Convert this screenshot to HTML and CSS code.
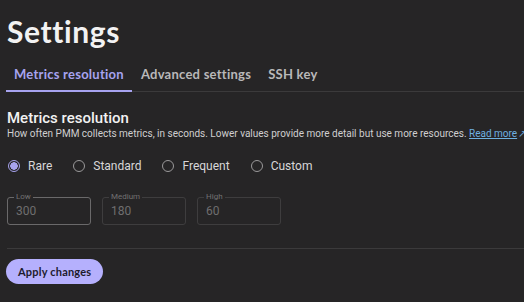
FILE: index.html
```html
<!DOCTYPE html>
<html>
<head>
    <title>Settings</title>
    <link rel="stylesheet" href="styles.css">
</head>
<body>
    <h1 class="page-title">Settings</h1>
    <div class="tabs">
        <div class="tab active">Metrics resolution</div>
        <div class="tab">Advanced settings</div>
        <div class="tab">SSH key</div>
    </div>

    <div class="section">
        <h2 class="section-title">Metrics resolution</h2>
        <p class="section-desc">How often PMM collects metrics, in seconds. Lower values provide more detail but use more resources. <a href="#" class="link">Read more</a><span class="ext">&#8599;</span></p>

        <div class="radios">
            <label class="radio checked"><span class="dot"></span>Rare</label>
            <label class="radio"><span class="dot"></span>Standard</label>
            <label class="radio"><span class="dot"></span>Frequent</label>
            <label class="radio"><span class="dot"></span>Custom</label>
        </div>

        <div class="fields">
            <div class="field strong">
                <span class="field-label">Low</span>
                <span class="field-value">300</span>
            </div>
            <div class="field">
                <span class="field-label">Medium</span>
                <span class="field-value">180</span>
            </div>
            <div class="field">
                <span class="field-label">High</span>
                <span class="field-value">60</span>
            </div>
        </div>
    </div>

    <div class="divider"></div>
    <button class="apply">Apply changes</button>
</body>
</html>
```

FILE: styles.css
```css
body {
    margin: 0;
    padding: 0 0 0 7px;
    background-color: #262526;
    color: #f2f2f2;
    font-family: Roboto, "Liberation Sans", sans-serif;
    overflow: hidden;
}

.page-title {
    font-family: Lato, sans-serif;
    font-weight: 700;
    font-size: 30px;
    line-height: 36px;
    margin: 13px 0 0 0;
    letter-spacing: 0.6px;
}

.tabs {
    display: flex;
    gap: 1px;
    margin-top: 17px;
    margin-left: -1px;
    border-bottom: 1px solid #3b3a3b;
}

.tab {
    font-family: Lato, sans-serif;
    font-weight: 700;
    font-size: 13px;
    line-height: 16px;
    color: #b9b8b9;
    padding: 0 8px 8px 8px;
    border-bottom: 2px solid transparent;
    margin-bottom: -1px;
    letter-spacing: 0.25px;
}

.tab.active {
    color: #a7a3ef;
    border-bottom-color: #a7a3ef;
}

.section-title {
    font-size: 15px;
    font-weight: 500;
    margin: 17px 0 0 0;
    line-height: 18px;
}

.section-desc {
    font-size: 10px;
    color: #d0cfd0;
    margin: 0;
    line-height: 14px;
    white-space: nowrap;
}

.link {
    color: #6fb0e0;
}

.ext {
    color: #6fb0e0;
    margin-left: 1px;
}

.radios {
    display: flex;
    gap: 21px;
    margin-top: 18px;
    margin-left: 1px;
}

.radio {
    display: flex;
    align-items: center;
    gap: 8px;
    font-size: 12px;
    color: #d8d7d8;
}

.dot {
    width: 10px;
    height: 10px;
    border: 1.5px solid #9a999a;
    border-radius: 50%;
    display: inline-block;
    box-sizing: content-box;
}

.radio.checked .dot {
    border-color: #a7a3ef;
    background: radial-gradient(circle, #a7a3ef 0 3.5px, transparent 4px);
}

.fields {
    display: flex;
    gap: 11px;
    margin-top: 24px;
}

.field {
    position: relative;
    width: 84px;
    height: 28px;
    border: 1px solid #3e3d3e;
    border-radius: 3px;
    box-sizing: border-box;
    display: flex;
    align-items: center;
    padding-left: 8px;
}

.field.strong {
    border-color: #6a696a;
}

.field-label {
    position: absolute;
    top: -6px;
    left: 6px;
    font-size: 8px;
    line-height: 10px;
    padding: 0 2px;
    background-color: #262526;
    color: #727172;
}

.field-value {
    font-size: 12px;
    color: #6f6e6f;
}

.divider {
    height: 1px;
    background-color: #3b3a3b;
    margin-top: 23px;
}

.apply {
    margin-top: 10px;
    margin-left: -1px;
    height: 25px;
    padding: 0 12px;
    border: none;
    border-radius: 13px;
    background-color: #b5b0fd;
    color: #1d1b2c;
    font-family: Lato, sans-serif;
    font-weight: 700;
    font-size: 11px;
    letter-spacing: 0.2px;
}
```
